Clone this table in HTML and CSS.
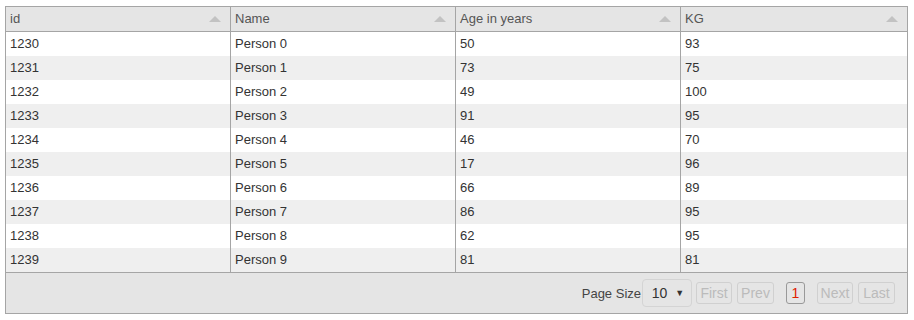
FILE: index.html
```html
<!DOCTYPE html>
<html>
<head>
<meta charset="utf-8">
<link rel="stylesheet" href="styles.css">
</head>
<body>
<div class="grid">
  <table class="tbl">
    <colgroup><col class="c1"><col class="c2"><col class="c3"><col class="c4"></colgroup>
    <thead>
      <tr>
        <th><span>id</span><i class="sort"></i></th>
        <th><span>Name</span><i class="sort"></i></th>
        <th><span>Age in years</span><i class="sort"></i></th>
        <th><span>KG</span><i class="sort"></i></th>
      </tr>
    </thead>
    <tbody>
      <tr><td>1230</td><td>Person 0</td><td>50</td><td>93</td></tr>
      <tr><td>1231</td><td>Person 1</td><td>73</td><td>75</td></tr>
      <tr><td>1232</td><td>Person 2</td><td>49</td><td>100</td></tr>
      <tr><td>1233</td><td>Person 3</td><td>91</td><td>95</td></tr>
      <tr><td>1234</td><td>Person 4</td><td>46</td><td>70</td></tr>
      <tr><td>1235</td><td>Person 5</td><td>17</td><td>96</td></tr>
      <tr><td>1236</td><td>Person 6</td><td>66</td><td>89</td></tr>
      <tr><td>1237</td><td>Person 7</td><td>86</td><td>95</td></tr>
      <tr><td>1238</td><td>Person 8</td><td>62</td><td>95</td></tr>
      <tr><td>1239</td><td>Person 9</td><td>81</td><td>81</td></tr>
    </tbody>
  </table>
  <div class="footer">
    <span class="ps-label">Page Size</span>
    <div class="select"><span>10</span><span class="caret">&#9660;</span></div>
    <button class="btn dis w36">First</button>
    <button class="btn dis w37">Prev</button>
    <button class="btn cur">1</button>
    <button class="btn dis w36">Next</button>
    <button class="btn dis w37">Last</button>
  </div>
</div>
</body>
</html>
```
FILE: styles.css
```css
html, body { margin: 0; padding: 0; background: #fff; }
body { padding: 6px 0 0 5px; font-family: "Liberation Sans", Arial, sans-serif; font-size: 13px; color: #333; }
.grid { width: 901px; border: 1px solid #a5a5a5; }
.tbl { width: 100%; border-collapse: separate; border-spacing: 0; table-layout: fixed; }
.c1 { width: 224px; } .c2 { width: 225px; } .c3 { width: 225px; } .c4 { width: 227px; }
.tbl th { background: #e5e5e5; line-height: 24px; padding: 0 0 0 4px; text-align: left; font-weight: normal; color: #555; border-left: 1px solid #a5a5a5; border-bottom: 1px solid #a5a5a5; position: relative; }
.tbl th:first-child, .tbl td:first-child { border-left: none; padding-left: 4px; }
.sort { position: absolute; right: 9px; top: 9px; width: 0; height: 0; border-left: 6px solid transparent; border-right: 6px solid transparent; border-bottom: 6px solid #c2c2c2; }
.tbl td { line-height: 24px; padding: 0 0 0 4px; border-left: 1px solid #a5a5a5; color: #333; white-space: nowrap; }
.tbl tbody tr:nth-child(even) td { background: #efefef; }
.tbl tbody tr:nth-child(odd) td { background: #fff; }
.footer { border-top: 1px solid #a5a5a5; background: #e5e5e5; height: 40px; display: flex; align-items: center; justify-content: flex-end; padding-right: 12px; }
.ps-label { color: #444; font-size: 13px; margin-right: 1px; }
.select { width: 50px; height: 28px; border: 1px solid #d4d4d4; border-radius: 4px; display: flex; align-items: center; justify-content: center; gap: 8px; font-size: 14px; color: #333; box-sizing: border-box; margin-right: 4px; padding-left: 2px; }
.caret { font-size: 9px; color: #333; }
.btn { font-family: "Liberation Sans", Arial, sans-serif; font-size: 14px; height: 22px; padding: 0; background: transparent; border: 1px solid #d0d0d0; border-radius: 3px; color: #bbb; box-sizing: border-box; text-align: center; }
.w36 { width: 36px; } .w37 { width: 37px; }
.btn.dis + .btn.dis { margin-left: 5px; }
.btn.cur { color: #e02000; border-color: #999; width: 19px; margin: 0 12px; }
```
